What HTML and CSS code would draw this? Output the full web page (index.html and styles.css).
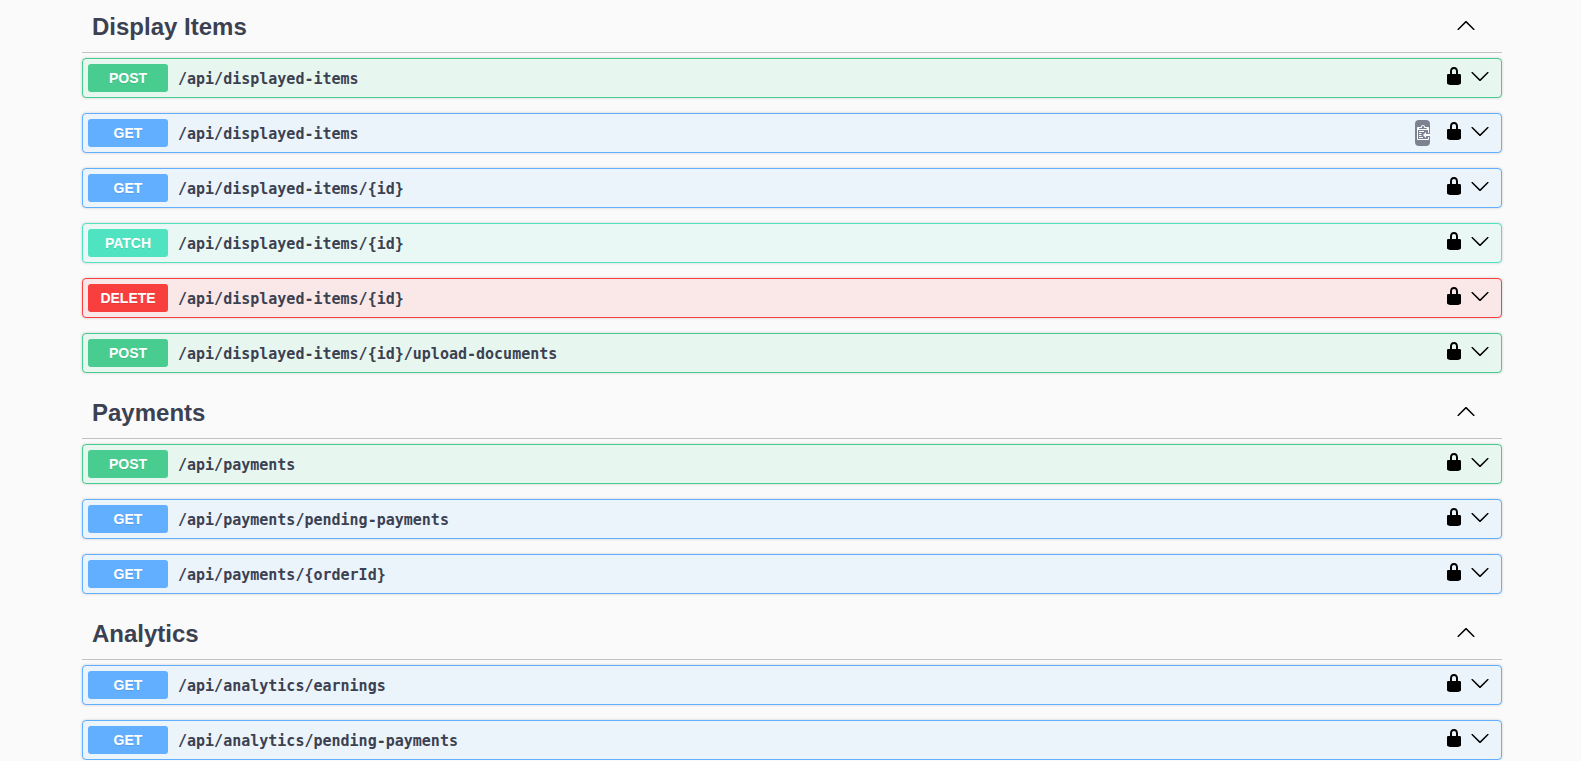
FILE: index.html
```html
<!DOCTYPE html>
<html lang="en">
<head>
<meta charset="utf-8">
<title>API documentation</title>
<link rel="stylesheet" href="styles.css">
</head>
<body>
<svg class="sprite" aria-hidden="true">
  <symbol id="lock" viewBox="0 0 20 20"><path d="M15.8 8H14V5.6C14 2.703 12.665 1 10 1 7.334 1 6 2.703 6 5.6V8H4c-.553 0-1 .646-1 1.199V17c0 .549.428 1.139.951 1.307l1.197.387C5.672 18.861 6.55 19 7.1 19h5.8c.549 0 1.428-.139 1.951-.307l1.196-.387c.524-.167.953-.757.953-1.306V9.199C17 8.646 16.352 8 15.8 8zM12 8H8V5.199C8 3.754 8.797 3 10 3c1.203 0 2 .754 2 2.199V8z"/></symbol>
  <symbol id="down" viewBox="0 0 20 20"><path d="M17.418 6.109c.272-.268.709-.268.979 0s.271.701 0 .969l-7.908 7.83c-.27.268-.707.268-.979 0l-7.908-7.83c-.27-.268-.27-.701 0-.969.271-.268.709-.268.979 0L10 13.25l7.418-7.141z"/></symbol>
  <symbol id="up" viewBox="0 0 20 20"><path d="M17.418 14.908c.272.268.709.268.979 0s.271-.701 0-.969l-7.908-7.83c-.27-.268-.707-.268-.979 0l-7.908 7.83c-.27.268-.27.701 0 .969.271.268.709.268.979 0L10 7.767l7.418 7.141z"/></symbol>
  <symbol id="copy" viewBox="0 0 15 16"><path transform="translate(2,-1)" fill="#fff" d="M2 13h4v1H2v-1zm5-6H2v1h5V7zm2 3V8l-3 3 3 3v-2h5v-2H9zM4.5 9H2v1h2.5V9zM2 12h2.5v-1H2v1zm9 1h1v2c-.02.28-.11.52-.3.7-.19.18-.42.28-.7.3H1c-.55 0-1-.45-1-1V4c0-.55.45-1 1-1h3c0-1.11.89-2 2-2 1.11 0 2 .89 2 2h3c.55 0 1 .45 1 1v5h-1V6H1v9h10v-2zM2 5h8c0-.55-.45-1-1-1H8c-.55 0-1-.45-1-1s-.45-1-1-1-1 .45-1 1-.45 1-1 1H3c-.55 0-1 .45-1 1z"/></symbol>
</svg>
<main class="wrapper">
  <section class="tag">
    <header class="tag-header"><h2>Display Items</h2><div class="tools"><button class="icon-btn" aria-label="Collapse Display Items"><svg><use href="#up"/></svg></button></div></header>
    <div class="operations">
      <div class="op post"><button class="summary"><span class="method">POST</span><span class="path">/api/displayed-items</span></button><div class="tools"><button class="icon-btn" aria-label="Authorize"><svg><use href="#lock"/></svg></button><button class="icon-btn" aria-label="Expand"><svg><use href="#down"/></svg></button></div></div>
      <div class="op get"><button class="summary"><span class="method">GET</span><span class="path">/api/displayed-items</span></button><button class="copy" aria-label="Copy path"><svg><use href="#copy"/></svg></button><div class="tools"><button class="icon-btn" aria-label="Authorize"><svg><use href="#lock"/></svg></button><button class="icon-btn" aria-label="Expand"><svg><use href="#down"/></svg></button></div></div>
      <div class="op get"><button class="summary"><span class="method">GET</span><span class="path">/api/displayed-items/{id}</span></button><div class="tools"><button class="icon-btn" aria-label="Authorize"><svg><use href="#lock"/></svg></button><button class="icon-btn" aria-label="Expand"><svg><use href="#down"/></svg></button></div></div>
      <div class="op patch"><button class="summary"><span class="method">PATCH</span><span class="path">/api/displayed-items/{id}</span></button><div class="tools"><button class="icon-btn" aria-label="Authorize"><svg><use href="#lock"/></svg></button><button class="icon-btn" aria-label="Expand"><svg><use href="#down"/></svg></button></div></div>
      <div class="op delete"><button class="summary"><span class="method">DELETE</span><span class="path">/api/displayed-items/{id}</span></button><div class="tools"><button class="icon-btn" aria-label="Authorize"><svg><use href="#lock"/></svg></button><button class="icon-btn" aria-label="Expand"><svg><use href="#down"/></svg></button></div></div>
      <div class="op post"><button class="summary"><span class="method">POST</span><span class="path">/api/displayed-items/{id}/upload-documents</span></button><div class="tools"><button class="icon-btn" aria-label="Authorize"><svg><use href="#lock"/></svg></button><button class="icon-btn" aria-label="Expand"><svg><use href="#down"/></svg></button></div></div>
    </div>
  </section>
  <section class="tag">
    <header class="tag-header"><h2>Payments</h2><div class="tools"><button class="icon-btn" aria-label="Collapse Payments"><svg><use href="#up"/></svg></button></div></header>
    <div class="operations">
      <div class="op post"><button class="summary"><span class="method">POST</span><span class="path">/api/payments</span></button><div class="tools"><button class="icon-btn" aria-label="Authorize"><svg><use href="#lock"/></svg></button><button class="icon-btn" aria-label="Expand"><svg><use href="#down"/></svg></button></div></div>
      <div class="op get"><button class="summary"><span class="method">GET</span><span class="path">/api/payments/pending-payments</span></button><div class="tools"><button class="icon-btn" aria-label="Authorize"><svg><use href="#lock"/></svg></button><button class="icon-btn" aria-label="Expand"><svg><use href="#down"/></svg></button></div></div>
      <div class="op get"><button class="summary"><span class="method">GET</span><span class="path">/api/payments/{orderId}</span></button><div class="tools"><button class="icon-btn" aria-label="Authorize"><svg><use href="#lock"/></svg></button><button class="icon-btn" aria-label="Expand"><svg><use href="#down"/></svg></button></div></div>
    </div>
  </section>
  <section class="tag">
    <header class="tag-header"><h2>Analytics</h2><div class="tools"><button class="icon-btn" aria-label="Collapse Analytics"><svg><use href="#up"/></svg></button></div></header>
    <div class="operations">
      <div class="op get"><button class="summary"><span class="method">GET</span><span class="path">/api/analytics/earnings</span></button><div class="tools"><button class="icon-btn" aria-label="Authorize"><svg><use href="#lock"/></svg></button><button class="icon-btn" aria-label="Expand"><svg><use href="#down"/></svg></button></div></div>
      <div class="op get"><button class="summary"><span class="method">GET</span><span class="path">/api/analytics/pending-payments</span></button><div class="tools"><button class="icon-btn" aria-label="Authorize"><svg><use href="#lock"/></svg></button><button class="icon-btn" aria-label="Expand"><svg><use href="#down"/></svg></button></div></div>
    </div>
  </section>
</main>
</body>
</html>
```
FILE: styles.css
```css
* {
  box-sizing: border-box;
}

body {
  margin: 0;
  padding: 2px 0 0 3px;
  background: #fafafa;
  color: #3b4151;
  font-family: "Liberation Sans", Arial, sans-serif;
}

button {
  margin: 0;
  padding: 0;
  border: 0;
  background: none;
  color: inherit;
  font: inherit;
  cursor: pointer;
}

.sprite {
  position: absolute;
  width: 0;
  height: 0;
}

.wrapper {
  display: flex;
  flex-direction: column;
  gap: 15px;
  max-width: 1460px;
  margin: 0 auto;
  padding: 0 20px;
}

.tag-header {
  display: flex;
  align-items: center;
  justify-content: space-between;
  padding: 11px 26px 11px 10px;
  border-bottom: 1px solid rgba(59, 65, 81, .3);
}

.tag-header h2 {
  margin: 0;
  font-size: 24px;
  line-height: 28px;
}

.operations {
  display: flex;
  flex-direction: column;
  gap: 15px;
  padding-top: 5px;
}

.op {
  display: flex;
  align-items: center;
  padding: 5px 11px 5px 5px;
  border: 1px solid var(--accent);
  border-radius: 4px;
  background: var(--tint);
  box-shadow: 0 0 3px rgba(0, 0, 0, .19);
}

.post {
  --accent: #49cc90;
  --tint: #e8f6f0;
}

.get {
  --accent: #61affe;
  --tint: #ebf3fb;
}

.patch {
  --accent: #50e3c2;
  --tint: #e9f8f5;
}

.delete {
  --accent: #f93e3e;
  --tint: #fae7e7;
}

.summary {
  display: flex;
  flex: 1;
  align-items: center;
  gap: 10px;
  text-align: left;
}

.method {
  width: 80px;
  border-radius: 3px;
  background: var(--accent);
  color: #fff;
  font-size: 14px;
  font-weight: 700;
  line-height: 28px;
  text-align: center;
  text-shadow: 0 1px 0 rgba(0, 0, 0, .1);
}

.path {
  padding-top: 2px;
  font-family: "DejaVu Sans Mono", monospace;
  font-size: 15px;
  font-weight: 700;
  line-height: 18px;
}

.tools {
  display: flex;
  gap: 6px;
  padding-bottom: 4px;
}

.icon-btn,
.icon-btn svg {
  display: block;
  width: 20px;
  height: 20px;
}

.icon-btn {
  color: #000;
}

.copy {
  display: flex;
  align-items: center;
  height: 26px;
  margin-right: 14px;
  border-radius: 4px;
  background: #7d8293;
}

.copy svg {
  width: 15px;
  height: 16px;
}
```
